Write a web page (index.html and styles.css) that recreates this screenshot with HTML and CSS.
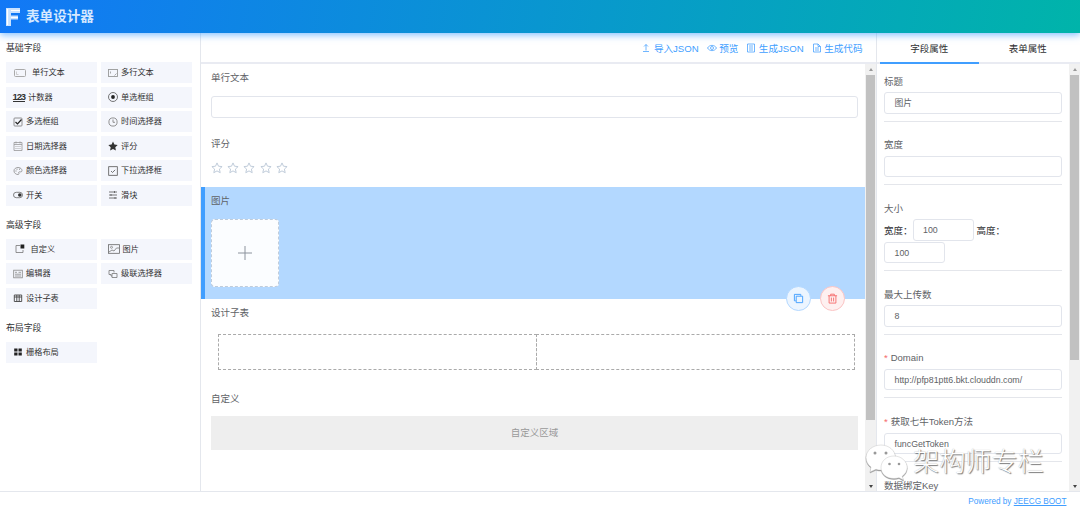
FILE: index.html
```html
<!DOCTYPE html>
<html lang="zh-CN">
<head>
    <meta charset="UTF-8">
    <meta name="viewport" content="width=device-width, initial-scale=1.0">
    <title>表单设计器</title>
    <link rel="stylesheet" href="styles.css">
</head>
<body>

    <!-- Header -->
    <header>
        <svg class="logo" viewBox="0 0 14 18">
            <path d="M0 0H14V5H5V7.500H12V11.500H5V18H0Z" fill="#c9e2ff"/>
            <path d="M5 2.500H14M5 9.500H12M1.500 1V17" stroke="#fff" stroke-width="1.200"/>
        </svg>
        <h1>表单设计器</h1>
    </header>

    <div class="container">

        <!-- Field list -->
        <aside class="components">
            <h2>基础字段</h2>
            <ul>
                <li><svg class="wide" viewBox="0 0 12 9"><rect x=".5" y="1" width="11" height="7" rx="1" fill="none" stroke="#aaa"/><path d="M2.500 3v3h2" fill="none" stroke="#bbb" stroke-width=".7"/></svg>单行文本</li>
                <li><svg viewBox="0 0 10 10"><rect x=".5" y="1.500" width="9" height="7" fill="none" stroke="#999" stroke-width=".9"/><path d="M2.500 3.500v2M6.500 7.500l2-2" stroke="#888" stroke-width=".7"/></svg>多行文本</li>
                <li><b class="num">123</b>计数器</li>
                <li><svg viewBox="0 0 10 10"><circle cx="5" cy="5" r="4.500" fill="none" stroke="#555" stroke-width=".8"/><circle cx="5" cy="5" r="1.900" fill="#222"/></svg>单选框组</li>
                <li><svg viewBox="0 0 10 10"><rect x="1" y="1" width="8" height="8" rx=".8" fill="none" stroke="#777" stroke-width=".8"/><path d="M2.500 5l2 2 4-4.500" fill="none" stroke="#222" stroke-width="1.200"/></svg>多选框组</li>
                <li><svg viewBox="0 0 10 10"><circle cx="5" cy="5" r="4.100" fill="none" stroke="#777" stroke-width=".8"/><path d="M5 2.500V5.300H7" fill="none" stroke="#777" stroke-width=".8"/></svg>时间选择器</li>
                <li><svg viewBox="0 0 10 10"><path d="M1 1.500h8v8H1zM1 3.500h8M3 .5v2M7 .5v2" fill="none" stroke="#999" stroke-width=".8"/><path d="M2.500 5.500h5M2.500 7.500h5" stroke="#aaa" stroke-dasharray="1 1"/></svg>日期选择器</li>
                <li><svg viewBox="0 0 10 10"><path d="M5 .5l1.400 3 3.300.4-2.400 2.300.6 3.300L5 7.900 2.100 9.500l.6-3.300L.3 3.900l3.300-.4z" fill="#333"/></svg>评分</li>
                <li><svg viewBox="0 0 10 10"><path d="M1 5C.8 2.800 3 1.500 5 1.500c2.500 0 4 1.500 4 3.200C9 6 7.500 6 6.500 5.800c-1 0-1 .9-.6 1.500.3.700-.2 1.200-.9 1.200C3 8.500 1 7 1 5z" fill="none" stroke="#888" stroke-width=".8"/><path d="M2.500 5h1M3.500 3.200h1M6 3.200h1" stroke="#888"/></svg>颜色选择器</li>
                <li><svg viewBox="0 0 10 10"><rect x=".7" y=".7" width="8.600" height="8.600" fill="none" stroke="#555" stroke-width=".8"/><path d="M3 5l1.500 1.500L7.200 3.800" fill="none" stroke="#555" stroke-width=".8"/></svg>下拉选择框</li>
                <li><svg viewBox="0 0 10 10"><rect x=".5" y="2.300" width="9" height="5.400" rx="2.700" fill="none" stroke="#666" stroke-width=".8"/><circle cx="6.800" cy="5" r="1.800" fill="#333"/></svg>开关</li>
                <li><svg viewBox="0 0 10 10"><path d="M1 2h8M1 5h8M1 8h8M6.500 1v2M3 4v2M7 7v2" stroke="#555" stroke-width=".8"/></svg>滑块</li>
            </ul>

            <h2>高级字段</h2>
            <ul>
                <li class="shift"><svg class="wide" viewBox="0 0 12 10"><path d="M6 1.500H2v7h7V6" fill="none" stroke="#777" stroke-width=".8"/><rect x="6.500" y=".5" width="3.800" height="4" fill="#222"/></svg>自定义</li>
                <li><svg class="wide" viewBox="0 0 12 10"><rect x=".5" y=".7" width="11" height="8.600" fill="none" stroke="#666" stroke-width=".8"/><circle cx="3.500" cy="3.300" r="1" fill="none" stroke="#777" stroke-width=".7"/><path d="M1 8l3-2 2 1 2.500-3H11" fill="none" stroke="#777" stroke-width=".8"/></svg>图片</li>
                <li><svg viewBox="0 0 10 10"><rect x=".7" y="1.200" width="8.600" height="7.600" fill="none" stroke="#888" stroke-width=".8"/><path d="M2 3.300h2M5.500 3.300H8M2 5.200h6M2 7h6" stroke="#888" stroke-width=".8"/></svg>编辑器</li>
                <li><svg viewBox="0 0 10 10"><path d="M3 5.500H1v-4h5v2M5 8.500h4V4.500H4v4zM3 5.500v1.500h1" fill="none" stroke="#777" stroke-width=".8"/></svg>级联选择器</li>
                <li><svg viewBox="0 0 10 10"><path d="M1.300 2h7.400v6.500H1.300zM1.300 4h7.400M3.800 2v6.500M6.200 2v6.500" fill="none" stroke="#444" stroke-width=".9"/></svg>设计子表</li>
            </ul>

            <h2>布局字段</h2>
            <ul>
                <li><svg viewBox="0 0 10 10"><path d="M1.200 1.500h3.300v3H1.200zM5.500 1.500h3.300v3H5.500zM1.200 5.500h3.300v3H1.200zM5.500 5.500h3.300v3H5.500z" fill="#222"/></svg>栅格布局</li>
            </ul>
        </aside>

        <!-- Form canvas -->
        <main>
            <div class="toolbar">
                <a><svg viewBox="0 0 10 10"><path d="M2 8.500h6M5 7.500V1.500M3 3.500l2-2 2 2"/></svg>导入JSON</a>
                <a><svg viewBox="0 0 10 10"><path d="M.5 5C2.500 1.500 7.500 1.500 9.500 5 7.500 8.500 2.500 8.500.5 5z"/><circle cx="5" cy="5" r="1.500"/></svg>预览</a>
                <a><svg viewBox="0 0 10 10"><path d="M1.500 1h7v8h-7zM3 3h4M3 5h4M3 7h4"/></svg>生成JSON</a>
                <a><svg viewBox="0 0 10 10"><path d="M1.500 1h4.500l2.500 2.500V9h-7zM6 1v2.500h2.500M3 5h4M3 7h4"/></svg>生成代码</a>
            </div>
            <div class="scroll-area">
                <div class="form">
                    <div class="item item-input">
                        <label>单行文本</label>
                        <div class="input"></div>
                    </div>
                    <div class="item item-rate">
                        <label>评分</label>
                        <div class="stars">
                            <svg viewBox="0 0 12 12"><path d="M6 .9l1.500 3.300 3.600.4-2.700 2.500.8 3.600L6 8.900l-3.200 1.800.8-3.600L.9 4.600l3.600-.4z"/></svg>
                            <svg viewBox="0 0 12 12"><path d="M6 .9l1.500 3.300 3.600.4-2.700 2.500.8 3.600L6 8.900l-3.200 1.800.8-3.600L.9 4.600l3.600-.4z"/></svg>
                            <svg viewBox="0 0 12 12"><path d="M6 .9l1.500 3.300 3.600.4-2.700 2.500.8 3.600L6 8.900l-3.200 1.800.8-3.600L.9 4.600l3.600-.4z"/></svg>
                            <svg viewBox="0 0 12 12"><path d="M6 .9l1.500 3.300 3.600.4-2.700 2.500.8 3.600L6 8.900l-3.200 1.800.8-3.600L.9 4.600l3.600-.4z"/></svg>
                            <svg viewBox="0 0 12 12"><path d="M6 .9l1.500 3.300 3.600.4-2.700 2.500.8 3.600L6 8.900l-3.200 1.800.8-3.600L.9 4.600l3.600-.4z"/></svg>
                        </div>
                    </div>
                    <div class="item item-image active">
                        <label>图片</label>
                        <div class="upload"><svg viewBox="0 0 16 16"><path d="M8 1v14M1 8h14"/></svg></div>
                        <div class="actions">
                            <span class="copy"><svg viewBox="0 0 12 12"><path d="M3 8.500H1.500v-7h7V3M3.500 3.500h7v7h-7z"/></svg></span>
                            <span class="remove"><svg viewBox="0 0 12 12"><path d="M1 3h10M4 3V1.300h4V3M2.300 3v8h7.400V3M4.800 5v4.200M7.200 5v4.200"/></svg></span>
                        </div>
                    </div>
                    <div class="item item-table">
                        <label>设计子表</label>
                        <div class="grid"><div></div><div></div></div>
                    </div>
                    <div class="item item-custom">
                        <label>自定义</label>
                        <div class="custom">自定义区域</div>
                    </div>
                </div>
                <div class="scrollbar"><i class="up"></i><span class="thumb"></span><i class="down"></i></div>
            </div>
        </main>

        <!-- Field properties -->
        <aside class="config">
            <div class="tabs">
                <span class="on">字段属性</span>
                <span>表单属性</span>
            </div>
            <div class="scroll-area">
                <div class="props">
                    <div class="prop"><label>标题</label><div class="input">图片</div></div>
                    <div class="prop"><label>宽度</label><div class="input"></div></div>
                    <div class="prop">
                        <label>大小</label>
                        <div class="size">
                            <span>宽度：</span><div class="input">100</div><span>高度：</span><div class="input">100</div>
                        </div>
                    </div>
                    <div class="prop"><label>最大上传数</label><div class="input">8</div></div>
                    <div class="prop"><label><em>*</em>Domain</label><div class="input">http://pfp81ptt6.bkt.clouddn.com/</div></div>
                    <div class="prop"><label><em>*</em>获取七牛Token方法</label><div class="input">funcGetToken</div></div>
                    <div class="prop"><label>数据绑定Key</label></div>
                </div>
                <div class="scrollbar short"><i class="up"></i><span class="thumb"></span><i class="down"></i></div>
            </div>
        </aside>
    </div>

    <!-- Footer -->
    <footer>Powered by&nbsp;<a>JEECG BOOT</a></footer>

    <!-- Watermark -->
    <div class="watermark">
        <svg viewBox="0 0 44 38">
            <path d="M16 2C8 2 1 7.500 1 14.500c0 4 2 7.300 5 9.500L5 29l6-2.700c2 .6 3.500.8 5 .8 8 0 14.500-5.500 14.500-12.500S24 2 16 2z"/>
            <path d="M29 13c-7.500 0-13 5-13 11.500S21.500 35.500 29 35.500c1.800 0 3.500-.3 5-.8l4.500 2.300-1.300-3.800c3-2 5-5.200 5-8.700 0-6-5.700-11.500-13.200-11.500z"/>
            <g class="eyes"><circle cx="10" cy="10" r="1.500"/><circle cx="21" cy="10" r="1.500"/><circle cx="24.500" cy="21" r="1.300"/><circle cx="34" cy="21" r="1.300"/></g>
        </svg>
        <span>架构师专栏</span>
    </div>

</body>
</html>
```
FILE: styles.css
```css
/* Basic Reset */
* { margin: 0; padding: 0; box-sizing: border-box; }

/* Body Styling */
body {
    display: flex;
    flex-direction: column;
    height: 510px;
    overflow: hidden;
    position: relative;
    font-family: "Liberation Sans", "Noto Sans CJK SC", sans-serif;
    font-size: 9.5px;
    color: #606266;
    background-color: #fff;
}
svg {
    display: block;
    flex: none;
    fill: none;
}

/* Header */
header {
    position: relative;
    z-index: 1;
    display: flex;
    align-items: center;
    flex: none;
    height: 33px;
    padding-left: 6px;
    background: linear-gradient(100deg, #1278f6, #00b4aa);
    box-shadow: 0 2px 7px rgba(64, 158, 255, 0.65);
}
header h1 {
    font-size: 13.6px;
    line-height: 20px;
    color: #d5e8ff;
}
.logo {
    width: 14px;
    height: 18px;
    margin-right: 6px;
}

.container {
    display: flex;
    flex: none;
    height: 458px;
}

/* Field list */
.components {
    width: 200px;
    padding: 7px 8px 0 6px;
}
.components h2 {
    font-size: 8.9px;
    font-weight: normal;
    line-height: 16px;
    color: #303133;
}
.components ul {
    display: grid;
    grid-template-columns: 91px 91px;
    gap: 3.6px 4px;
    margin: 6px 0 10.800px;
    list-style: none;
}
.components li {
    display: flex;
    align-items: center;
    height: 21px;
    padding-left: 6.500px;
    font-size: 8.2px;
    line-height: 21px;
    color: #333;
    background-color: #f4f6fc;
}
.components li svg {
    width: 10px;
    height: 10px;
    margin-right: 3.500px;
}
.components li svg.wide {
    width: 12px;
    margin-right: 3px;
}
.components li:first-child svg.wide {
    margin-left: 1px;
    margin-right: 6.500px;
}
.components .shift svg.wide {
    margin-right: 5px !important;
}
.num {
    width: 12.500px;
    margin-right: 3px;
    font-family: "Liberation Sans", sans-serif;
    font-size: 9.5px;
    letter-spacing: -1.1px;
    line-height: 9px;
    color: #333;
    border-bottom: 1px solid #333;
}

/* Form canvas */
main {
    display: flex;
    flex-direction: column;
    width: 676px;
    border-left: 1px solid #e4e7ed;
}
.toolbar {
    display: flex;
    justify-content: flex-end;
    align-items: center;
    gap: 8px;
    flex: none;
    height: 31px;
    padding-right: 13.500px;
    font-size: 9.6px;
    color: #409eff;
    border-bottom: 2px solid #e9ebf2;
}
.toolbar a {
    display: flex;
    align-items: center;
    gap: 2.500px;
}
.toolbar svg {
    width: 10px;
    height: 10px;
    stroke: #409eff;
    stroke-width: .75;
}
.scroll-area {
    display: flex;
    flex: 1;
    min-height: 0;
}
.form {
    flex: 1;
}
.item {
    padding: 0 7px 0 10px;
}
.item label {
    display: block;
    line-height: 20px;
}
.item-input {
    height: 66px;
    padding-top: 4px;
}
.input {
    height: 22px;
    padding-left: 9.500px;
    font-size: 8.8px;
    line-height: 20px;
    border: 1px solid #e2e5ec;
    border-radius: 3px;
    background-color: #fff;
}
.item-input .input {
    margin-top: 8px;
}
.item-rate {
    height: 57.400px;
    padding-top: 4px;
}
.stars {
    display: flex;
    gap: 4.200px;
    margin-top: 8px;
}
.stars svg {
    width: 12px;
    height: 12px;
    stroke: #c0ccda;
    stroke-width: 1;
}
.item-image {
    position: relative;
    height: 111.600px;
    padding-top: 4px;
}
.active {
    padding-left: 6px;
    border-left: 4px solid #409eff;
    background-color: #b3d8ff;
}
.upload {
    display: flex;
    align-items: center;
    justify-content: center;
    width: 68px;
    height: 68px;
    margin-top: 8px;
    border: 1px dashed #c0ccda;
    border-radius: 4px;
    background-color: #fbfdff;
}
.upload svg {
    width: 16px;
    height: 16px;
    stroke: #8c939d;
}
.actions {
    position: absolute;
    right: 20px;
    bottom: -12px;
    display: flex;
    gap: 9px;
}
.actions span {
    display: flex;
    align-items: center;
    justify-content: center;
    width: 25px;
    height: 25px;
    border-radius: 50%;
}
.actions svg {
    width: 11px;
    height: 11px;
}
.copy {
    border: 1px solid #b3d8ff;
    background-color: #ecf5ff;
    stroke: #409eff;
}
.remove {
    border: 1px solid #fbc4c4;
    background-color: #fef0f0;
    stroke: #f56c6c;
}
.item-table {
    height: 86px;
    padding-top: 4px;
}
.grid {
    display: flex;
    margin: 11px 3px 0 7px;
}
.grid div {
    flex: 1;
    height: 36px;
    border: 1px dashed #aaa;
}
.grid div + div {
    margin-left: -1px;
}
.item-custom {
    padding-top: 4px;
}
.custom {
    height: 34px;
    margin-top: 7.400px;
    line-height: 34px;
    text-align: center;
    color: #999;
    background-color: #eee;
}

/* Scrollbars */
.scrollbar {
    display: flex;
    flex-direction: column;
    align-items: center;
    flex: none;
    width: 11px;
    background-color: #f1f1f1;
}
.scrollbar i {
    width: 0;
    height: 0;
    margin: 4px 0;
    border: 2.500px solid transparent;
}
.scrollbar .up {
    margin-top: 2px;
    border-bottom: 3px solid #999;
}
.scrollbar .down {
    margin: auto 0 1px;
    border-top: 3px solid #444;
}
.thumb {
    width: 9px;
    height: 345px;
    margin-top: -.5px;
    background-color: #c1c1c1;
}
.short .thumb {
    height: 285px;
}

/* Field properties */
.config {
    display: flex;
    flex-direction: column;
    width: 204px;
    border-left: 1px solid #e4e7ed;
}
.tabs {
    display: flex;
    flex: none;
    height: 31px;
    padding-left: 3px;
    border-bottom: 2px solid #e9ebf2;
}
.tabs span {
    width: 98.500px;
    height: 31px;
    line-height: 31px;
    text-align: center;
    color: #303133;
}
.tabs .on {
    border-bottom: 2px solid #409eff;
}
.props {
    flex: 1;
    min-width: 0;
    padding: 6.600px 7px 0;
    overflow: hidden;
}
.prop {
    margin-bottom: 12.600px;
    padding-bottom: 7px;
    border-bottom: 1px solid #e4e6eb;
}
.prop label {
    display: block;
    height: 21.500px;
    line-height: 21px;
}
.prop em {
    margin-right: 3px;
    font-style: normal;
    color: #f56c6c;
}
.prop .input {
    height: 21.500px;
}
.size {
    display: flex;
    flex-wrap: wrap;
    align-items: center;
    padding-right: 20px;
    row-gap: 1px;
    color: #303133;
}
.size span {
    font-family: "Noto Sans CJK TC", sans-serif;
    line-height: 20px;
}
.size .input {
    width: 61px;
    margin-right: 3px;
    color: #606266;
}

/* Footer */
footer {
    display: flex;
    justify-content: flex-end;
    flex: none;
    height: 19px;
    padding-right: 13.500px;
    font-size: 8.2px;
    line-height: 20px;
    color: #409eff;
    border-top: 1px solid #e4e7ed;
}
footer a {
    text-decoration: underline;
}

/* Watermark */
.watermark {
    position: absolute;
    left: 865px;
    top: 441px;
    z-index: 2;
    display: flex;
    align-items: center;
}
.watermark svg {
    width: 44px;
    height: 38px;
    margin-right: 4px;
    fill: #fff;
    stroke: #bbb;
    stroke-width: .4;
    filter: drop-shadow(.5px 1px .5px #999);
}
.watermark .eyes {
    fill: #999;
    stroke: none;
}
.watermark span {
    font-size: 26.2px;
    font-weight: 300;
    line-height: 42px;
    color: #fff;
    text-shadow: 1px 1px 1px #777, 0 0 1px #aaa;
}
```
